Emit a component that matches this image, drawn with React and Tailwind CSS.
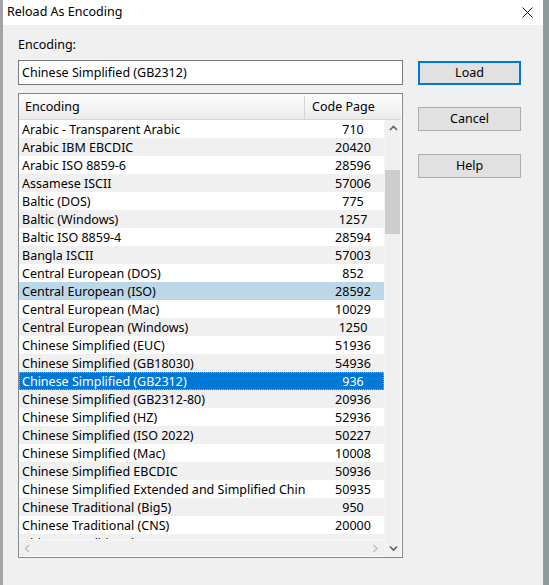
import React from 'react';

const rows = [
  ['Arabic - Transparent Arabic', '710'],
  ['Arabic IBM EBCDIC', '20420'],
  ['Arabic ISO 8859-6', '28596'],
  ['Assamese ISCII', '57006'],
  ['Baltic (DOS)', '775'],
  ['Baltic (Windows)', '1257'],
  ['Baltic ISO 8859-4', '28594'],
  ['Bangla ISCII', '57003'],
  ['Central European (DOS)', '852'],
  ['Central European (ISO)', '28592'],
  ['Central European (Mac)', '10029'],
  ['Central European (Windows)', '1250'],
  ['Chinese Simplified (EUC)', '51936'],
  ['Chinese Simplified (GB18030)', '54936'],
  ['Chinese Simplified (GB2312)', '936'],
  ['Chinese Simplified (GB2312-80)', '20936'],
  ['Chinese Simplified (HZ)', '52936'],
  ['Chinese Simplified (ISO 2022)', '50227'],
  ['Chinese Simplified (Mac)', '10008'],
  ['Chinese Simplified EBCDIC', '50936'],
  ['Chinese Simplified Extended and Simplified Chinese', '50935'],
  ['Chinese Traditional (Big5)', '950'],
  ['Chinese Traditional (CNS)', '20000'],
  ['Chinese Traditional (Eten)', '20002'],
];

const HOVER = 9;
const SELECTED = 14;

// small scrollbar chevrons
const Chevron = ({ dir, color }) => {
  const d = {
    up: 'M1 5 L4.5 1.5 L8 5',
    down: 'M1 1.5 L4.5 5 L8 1.5',
    left: 'M5 1 L1.5 4.5 L5 8',
    right: 'M1.5 1 L5 4.5 L1.5 8',
  }[dir];
  const vertical = dir === 'up' || dir === 'down';
  return (
    <svg width={vertical ? 9 : 7} height={vertical ? 7 : 9} viewBox={vertical ? '0 0 9 7' : '0 0 7 9'}>
      <path d={d} fill="none" stroke={color} strokeWidth="1.6" />
    </svg>
  );
};

const Row = ({ name, cp, i }) => {
  let cls = i % 2 === 1 ? 'bg-[#f0f0f0] text-black' : 'bg-white text-black';
  if (i === HOVER) cls = 'bg-[#bcd8e8] text-black';
  if (i === SELECTED) cls = 'bg-[#0078d7] text-white outline-1 outline-dotted outline-[#e89a48] -outline-offset-1';
  return (
    <div className={`flex h-[18px] shrink-0 items-center pt-[2px] ${cls}`}>
      <div className="w-[286px] shrink-0 overflow-hidden whitespace-nowrap pl-[3px]">{name}</div>
      <div className="w-[79px] shrink-0 pl-[17px] text-center">{cp}</div>
    </div>
  );
};

const Button = ({ children, primary, className = '' }) => (
  <button
    className={`flex h-[24px] w-[103px] items-center justify-center bg-[#e1e1e1] pt-[1px] text-black ${
      primary ? 'border-2 border-[#0078d7]' : 'border border-[#adadad]'
    } ${className}`}
  >
    {children}
  </button>
);

export default function App() {
  return (
    <div
      className="flex h-[585px] w-[549px] overflow-hidden bg-[#a9b0b0] text-[12.5px] text-black"
      style={{ fontFamily: '"Noto Sans", "Liberation Sans", sans-serif' }}
    >
      {/* background app peeking through */}
      <div className="w-[3px] shrink-0 bg-[#a4a4a4]" />

      <div className="flex w-[541px] shrink-0 flex-col border-r border-[#9a9a9a]">
        {/* Title bar */}
        <div className="flex h-[25px] shrink-0 items-center justify-between bg-white pl-[4px] pr-[10px]">
          <span>Reload As Encoding</span>
          <svg width="11" height="11" viewBox="0 0 11 11">
            <path d="M0.5 0.5 L10.5 10.5 M10.5 0.5 L0.5 10.5" stroke="#111" strokeWidth="1" />
          </svg>
        </div>

        {/* Client area */}
        <div className="flex flex-1 items-start gap-[15px] bg-[#f0f0f0] pl-[15px] pt-[12px]">
          <div className="flex w-[385px] shrink-0 flex-col">
            <div className="h-[16px] leading-[16px]">Encoding:</div>

            <div className="mt-[7px] flex h-[25px] items-center border border-[#7a7a7a] bg-white pl-[3px] pt-[1px]">
              Chinese Simplified (GB2312)
            </div>

            {/* List view */}
            <div className="mt-[8px] flex h-[465px] flex-col border border-[#828790] bg-white pr-[1px]">
              <div className="flex h-[26px] shrink-0 border-b border-[#d5d5d5] bg-gradient-to-b from-[#fdfdfd] to-[#ebebeb] pt-[2px]">
                <div className="flex w-[286px] items-center border-r border-[#d5d5d5] pl-[6px]">Encoding</div>
                <div className="flex flex-1 items-center pl-[7px]">Code Page</div>
              </div>

              <div className="flex flex-1 overflow-hidden">
                <div className="flex w-[365px] shrink-0 flex-col">
                  <div className="flex h-[419px] flex-col overflow-hidden">
                    {rows.map(([n, c], i) => (
                      <Row key={n} name={n} cp={c} i={i} />
                    ))}
                  </div>
                  <div className="flex h-[17px] items-center justify-between border-t border-[#f8f8f8] bg-[#f0f0f0]">
                    <div className="flex w-[17px] justify-center">
                      <Chevron dir="left" color="#c2c2c2" />
                    </div>
                    <div className="flex w-[17px] justify-center">
                      <Chevron dir="right" color="#c2c2c2" />
                    </div>
                  </div>
                </div>

                <div className="flex w-[17px] shrink-0 flex-col border-l border-[#f4f4f4] bg-[#f0f0f0]">
                  <div className="flex h-[17px] items-center justify-center">
                    <Chevron dir="up" color="#606060" />
                  </div>
                  <div className="mt-[33px] h-[64px] w-[15px] bg-[#cdcdcd]" />
                  <div className="flex-1" />
                  <div className="flex h-[17px] items-center justify-center">
                    <Chevron dir="down" color="#606060" />
                  </div>
                </div>
              </div>
            </div>
          </div>

          <div className="mt-[24px] flex flex-col">
            <Button primary>Load</Button>
            <Button className="mt-[22px]">Cancel</Button>
            <Button className="mt-[23px]">Help</Button>
          </div>
        </div>
      </div>

      <div className="flex-1 bg-[#8e9a98]" />
    </div>
  );
}
